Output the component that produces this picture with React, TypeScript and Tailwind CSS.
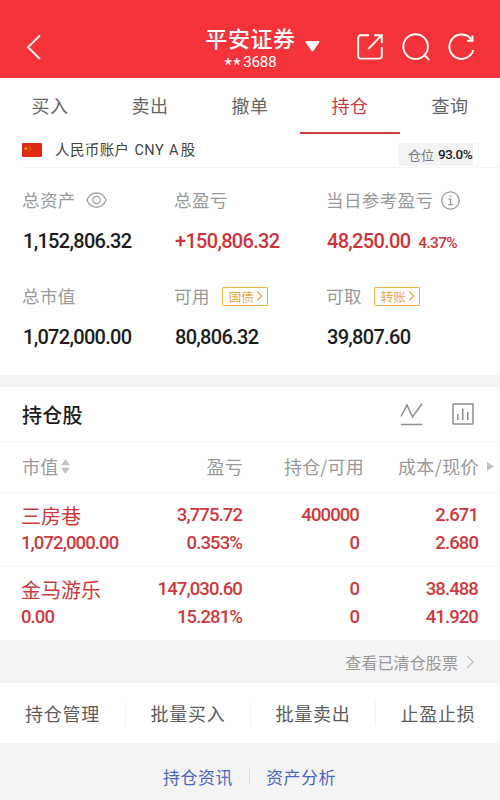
import React from 'react';

interface Holding {
    name: string;
    marketValue: string;
    profit: string;
    profitRate: string;
    amount: string;
    available: string;
    cost: string;
    price: string;
}

const TABS = ['买入', '卖出', '撤单', '持仓', '查询'];

const ACTIONS = ['持仓管理', '批量买入', '批量卖出', '止盈止损'];

const HOLDINGS: Holding[] = [
    {
        name: '三房巷',
        marketValue: '1,072,000.00',
        profit: '3,775.72',
        profitRate: '0.353%',
        amount: '400000',
        available: '0',
        cost: '2.671',
        price: '2.680'
    },
    {
        name: '金马游乐',
        marketValue: '0.00',
        profit: '147,030.60',
        profitRate: '15.281%',
        amount: '0',
        available: '0',
        cost: '38.488',
        price: '41.920'
    }
];

const Header: React.FC = () => (
    <header className="relative flex h-[78px] items-start justify-between bg-[#f4333a] text-white">
        <svg className="mt-[34px] ml-[26px] h-[26px] w-4" viewBox="0 0 16 26" fill="none" stroke="currentColor" strokeWidth="1.8">
            <path d="M14 1.5 2 13.2 14 25" />
        </svg>
        <div className="absolute top-6 left-[205px] flex w-[91px] flex-col items-center">
            <h1 className="h-7 text-[22px] leading-[26px] font-medium tracking-[0.6px] whitespace-nowrap">平安证券</h1>
            <div className="mt-px flex h-[18px] items-center font-['Roboto'] text-[15px] leading-[18px]">
                <span className="mt-[3px] mr-px text-[17px] tracking-[1.5px]">**</span>
                <span className="tracking-[-0.1px]">3688</span>
            </div>
        </div>
        <div className="mt-[33px] flex pr-[24px]">
            <svg className="mt-2 mr-[36px] h-[11px] w-[15px]" viewBox="0 0 15 11" fill="currentColor">
                <path d="M1.5 0h12q1.4.2.7 1.4L8.4 10q-.9 1.2-1.8 0L.8 1.4Q.1.2 1.5 0Z" />
            </svg>
            <svg className="mr-[18px] h-7 w-7" viewBox="0 0 28 28" fill="none" stroke="currentColor" strokeWidth="1.9">
                <path d="M13 2.2H5Q2.2 2.2 2.2 5v18q0 2.6 2.8 2.6h18q2.8 0 2.8-2.6v-9" />
                <path d="M12.2 16.2 25.5 2.4M18.3 2.2h7.5v8" />
            </svg>
            <svg className="mr-[18px] h-7 w-7" viewBox="0 0 28 28" fill="none" stroke="currentColor" strokeWidth="1.9">
                <circle cx="13.6" cy="13.6" r="12.3" />
                <path d="m21.8 21.3 5.4 5.6" />
            </svg>
            <svg className="h-7 w-7" viewBox="0 0 28 28" fill="none" stroke="currentColor" strokeWidth="1.9">
                <path d="M25.3 17A12.2 12.2 0 1 1 23.5 6.6" />
                <path d="M24.5 2.5v5.2h-5.4" />
            </svg>
        </div>
    </header>
);

const Tabs: React.FC = () => (
    <nav className="grid h-[54px] grid-cols-5 text-center text-[18px] leading-[54px] tracking-[0.5px] text-[#666]">
        {TABS.map((tab) => (
            <div key={tab} className={tab === '持仓' ? 'border-b-2 border-[#cf3a3e] text-[#cf3a3e]' : ''}>
                {tab}
            </div>
        ))}
    </nav>
);

const AccountBar: React.FC = () => (
    <div className="ml-[22px] flex h-9 items-center border-b border-[#f5f5f5]">
        <svg className="h-[14px] w-5" viewBox="0 0 20 14">
            <rect width="20" height="14" rx="0.8" fill="#dc2a14" />
            <path d="m3.8 3 .6 1.8h1.9L4.8 5.9l.5 1.8-1.5-1.1-1.5 1.1.5-1.8-1.5-1.1h1.9Z" fill="#f3a21c" />
            <g fill="#f08a1c">
                <circle cx="7" cy="2.8" r=".6" />
                <circle cx="8.3" cy="4.4" r=".6" />
                <circle cx="8.3" cy="6.4" r=".6" />
                <circle cx="7" cy="8" r=".6" />
            </g>
        </svg>
        <span className="mt-[3px] ml-[13px] font-['Roboto','Noto_Sans_CJK_SC',sans-serif] text-[14.5px] tracking-[0.4px] whitespace-nowrap text-[#444]">
            人民币账户 <span className="ml-px">CNY</span> <span className="ml-px">A</span>
            <span className="ml-[2px]">股</span>
        </span>
        <div className="mt-[10px] mr-[21px] ml-auto flex h-[23px] w-[81px] items-center border border-[#f6f6f7] bg-white">
            <div className="flex h-full w-[74px] items-center bg-[#f3f3f5] pl-[9px] text-[13px] whitespace-nowrap text-[#777]">
                仓位
                <span className="ml-1 font-['Roboto'] text-[13.5px] font-medium tracking-[-0.5px] text-[#222]">93.0%</span>
            </div>
        </div>
    </div>
);

interface StatProps {
    label: string;
    value: string;
    red?: boolean;
    rate?: string;
    children?: React.ReactNode;
}

const Stat: React.FC<StatProps> = ({ label, value, red, rate, children }) => (
    <div className="whitespace-nowrap">
        <div className="flex h-6 items-center text-[17.5px] leading-6 tracking-[0.4px] text-[#999]">
            {label}
            {children}
        </div>
        <div
            className={`mt-[17px] ml-px font-['Roboto'] text-[20px] leading-6 font-medium tracking-[-0.7px] ${red ? 'text-[#cf3338]' : 'text-[#1c1c1e]'}`}
        >
            {value}
            {rate && <span className="ml-2 text-[15.5px] tracking-[-0.7px]">{rate}</span>}
        </div>
    </div>
);

const LinkTag: React.FC<{ text: string }> = ({ text }) => (
    <span className="ml-[12px] flex h-[19px] w-[46px] items-center rounded-[1px] border border-[#efb04a] pl-[6px] text-[12.5px] leading-[17px] tracking-normal text-[#e9a83c]">
        {text}
        <svg className="ml-[2px] h-[10px] w-[7px]" viewBox="0 0 7 10" fill="none" stroke="currentColor" strokeWidth="1.2">
            <path d="M1 .5 5.8 5 1 9.5" />
        </svg>
    </span>
);

const Summary: React.FC = () => (
    <section className="grid h-[207px] grid-cols-[152px_152px_1fr] content-start gap-y-[29px] pt-5 pl-[22px]">
        <Stat label="总资产" value="1,152,806.32">
            <svg className="ml-[10px] h-4 w-[21px]" viewBox="0 0 21 16" fill="none" stroke="#999" strokeWidth="1.2">
                <path d="M.8 8C3 3.3 6.5.8 10.5.8S18 3.3 20.2 8C18 12.7 14.5 15.2 10.5 15.2S3 12.7.8 8Z" />
                <circle cx="10.5" cy="8" r="3.6" />
            </svg>
        </Stat>
        <Stat label="总盈亏" value="+150,806.32" red />
        <Stat label="当日参考盈亏" value="48,250.00" rate="4.37%" red>
            <svg className="ml-2 h-[19px] w-[19px]" viewBox="0 0 19 19" fill="none" stroke="#999" strokeWidth="1.3">
                <circle cx="9.5" cy="9.5" r="8.7" />
                <path d="M7.6 8h2v5.5M7.3 13.7h4.6M8.6 5.2h1.8" />
            </svg>
        </Stat>
        <Stat label="总市值" value="1,072,000.00" />
        <Stat label="可用" value="80,806.32">
            <LinkTag text="国债" />
        </Stat>
        <Stat label="可取" value="39,807.60">
            <LinkTag text="转账" />
        </Stat>
    </section>
);

const HoldingRow: React.FC<{ item: Holding }> = ({ item }) => (
    <div className="grid h-[74px] grid-cols-[110px_111px_117px_119px] border-t border-[#f3f3f3] pt-2 pl-[21px] text-right font-['Roboto'] text-[18.5px] leading-7 font-medium tracking-[-0.9px] text-[#cd3a3e]">
        <div className="text-left whitespace-nowrap">
            <div className="h-7 font-['Noto_Sans_CJK_SC'] text-[20px] leading-[30px] font-normal tracking-normal">{item.name}</div>
            <div>{item.marketValue}</div>
        </div>
        <div>
            <div>{item.profit}</div>
            <div>{item.profitRate}</div>
        </div>
        <div>
            <div>{item.amount}</div>
            <div>{item.available}</div>
        </div>
        <div>
            <div>{item.cost}</div>
            <div>{item.price}</div>
        </div>
    </div>
);

const Holdings: React.FC = () => (
    <section>
        <div className="flex h-[54px] items-center pr-[26px] pl-[22px]">
            <h2 className="mt-[2px] text-[20px] leading-7 font-medium tracking-[0.3px] text-[#1c1c20]">持仓股</h2>
            <svg className="ml-auto h-[23px] w-[23px]" viewBox="0 0 23 23" fill="none" stroke="#8f8f8f" strokeWidth="1.5">
                <path d="m1 13.5 6-11.5 5.5 12L22 .8M.8 21.500h21.500" />
            </svg>
            <svg className="ml-[29px] h-[22px] w-[22px]" viewBox="0 0 22 22" fill="none" stroke="#8f8f8f" strokeWidth="1.5">
                <rect x="1" y="1" width="20" height="20" rx="0.5" />
                <path d="M5.8 11v6M10.8 5.5V17M15.8 9v8" />
            </svg>
        </div>
        <div className="grid h-[51px] grid-cols-[110px_111px_121px_115px_22px] items-center border-t border-[#f3f3f3] pb-[2px] pl-[22px] text-right text-[18px] tracking-[0.2px] whitespace-nowrap text-[#999]">
            <div className="flex items-center">
                市值
                <svg className="ml-[3px] h-[15px] w-[9px]" viewBox="0 0 9 15" fill="#c4c4c4">
                    <path d="M4.5 0 9 6.3H0ZM0 8.7h9L4.5 15Z" />
                </svg>
            </div>
            <div>盈亏</div>
            <div>持仓/可用</div>
            <div className="tracking-[0.4px]">成本/现价</div>
            <svg className="ml-2 h-[9px] w-[7px]" viewBox="0 0 7 9" fill="#c4c4c4">
                <path d="M0 0 7 4.5 0 9Z" />
            </svg>
        </div>
        {HOLDINGS.map((item) => (
            <HoldingRow key={item.name} item={item} />
        ))}
    </section>
);

export default function App() {
    return (
        <div className="h-[800px] w-[500px] overflow-hidden bg-white font-['Noto_Sans_CJK_SC',sans-serif]">
            <Header />
            <Tabs />
            <AccountBar />
            <Summary />
            <div className="h-3 bg-[#f4f4f4]" />
            <Holdings />

            {/* Cleared positions */}
            <div className="flex h-[43px] items-center justify-end bg-[#f4f4f4] pr-[26px] text-[16px] tracking-[0.1px] text-[#999]">
                查看已清仓股票
                <svg className="ml-[8px] h-[14px] w-2" viewBox="0 0 8 14" fill="none" stroke="#c4c4c4" strokeWidth="1.4">
                    <path d="m1 .8 6 6.2-6 6.2" />
                </svg>
            </div>

            {/* Batch actions */}
            <div className="grid h-[60px] grid-cols-4 items-center text-center text-[18px] tracking-[0.8px] text-[#5c5c5c]">
                {ACTIONS.map((action, i) => (
                    <div key={action} className={i > 0 ? 'border-l border-[#f3f3f3] leading-6' : 'leading-6'}>
                        {action}
                    </div>
                ))}
            </div>

            {/* Footer links */}
            <div className="flex h-[57px] items-center bg-[#f4f4f4] pt-[10px] pl-[163px] text-[17px] tracking-[0.5px] text-[#4a68c0]">
                <span className="leading-6">持仓资讯</span>
                <span className="mx-[16px] h-[15px] w-px bg-[#dcdcdc]" />
                <span className="leading-6">资产分析</span>
            </div>
        </div>
    );
}
